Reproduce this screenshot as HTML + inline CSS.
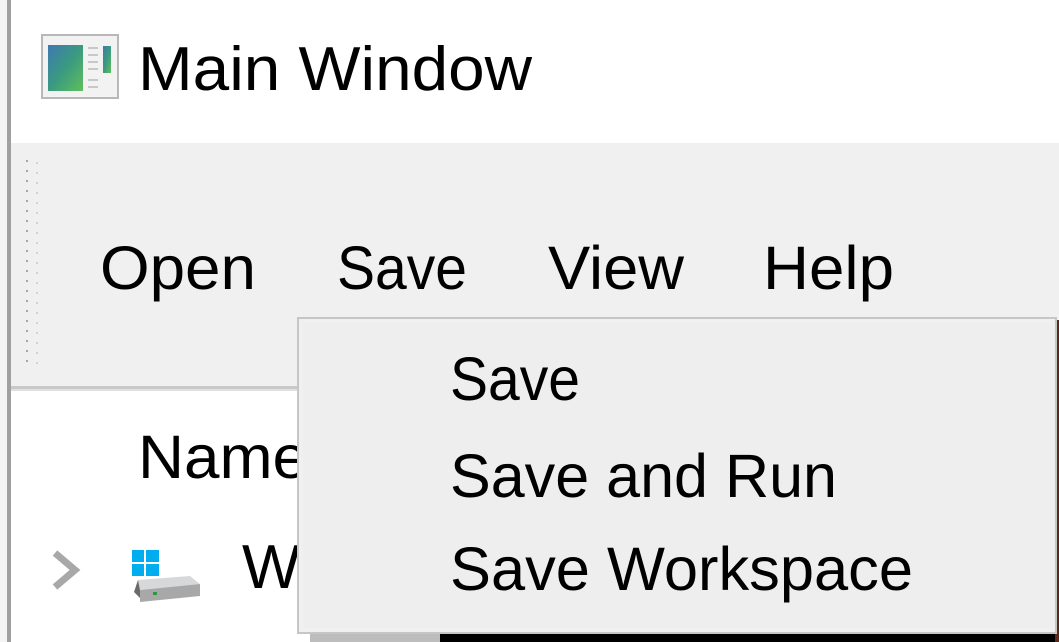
<!DOCTYPE html>
<html><head><meta charset="utf-8"><style>
html,body{margin:0;padding:0;width:1059px;height:642px;overflow:hidden;background:#fff}
svg{display:block}
text{font-family:"Liberation Sans",sans-serif;fill:#000}
</style></head><body>
<svg width="1059" height="642" viewBox="0 0 1059 642" xmlns="http://www.w3.org/2000/svg">
<defs>
<linearGradient id="g1" x1="0" y1="0" x2="1" y2="1"><stop offset="0" stop-color="#3f78b0"/><stop offset="0.5" stop-color="#3a9a80"/><stop offset="1" stop-color="#5fbf5a"/></linearGradient>
</defs>
<rect width="1059" height="642" fill="#fff"/>
<rect x="0" y="0" width="8" height="642" fill="#f4f4f4"/>
<rect x="7" y="0" width="4" height="642" fill="#a0a0a0"/>
<rect x="11" y="143" width="1048" height="245" fill="#f0f0f0"/>
<rect x="11" y="386" width="1048" height="3" fill="#c8c8c8"/>
<rect x="11" y="389" width="1048" height="2" fill="#e0e0e0"/>
<line x1="27" y1="160" x2="27" y2="370" stroke="#a8a8a8" stroke-width="2" stroke-dasharray="2,8"/>
<line x1="37" y1="162" x2="37" y2="370" stroke="#c8c8c8" stroke-width="1.5" stroke-dasharray="2,8"/>
<rect x="42" y="35" width="76" height="63" fill="#f2f2f2" stroke="#b8b8b8" stroke-width="2"/>
<rect x="48" y="45" width="35" height="46" fill="url(#g1)"/>
<g stroke="#c8c8c8" stroke-width="2"><line x1="88" y1="48" x2="98" y2="48"/><line x1="88" y1="55" x2="98" y2="55"/><line x1="88" y1="62" x2="98" y2="62"/><line x1="88" y1="69" x2="98" y2="69"/><line x1="88" y1="80" x2="98" y2="80"/><line x1="88" y1="87" x2="98" y2="87"/></g>
<rect x="103" y="46" width="8" height="27" fill="url(#g1)"/>
<text x="138" y="90" font-size="62" textLength="394" lengthAdjust="spacingAndGlyphs">Main Window</text>
<text x="100" y="289" font-size="61" textLength="156" lengthAdjust="spacingAndGlyphs">Open</text>
<text x="337" y="289" font-size="61" textLength="130" lengthAdjust="spacingAndGlyphs">Save</text>
<text x="548" y="289" font-size="61" textLength="136" lengthAdjust="spacingAndGlyphs">View</text>
<text x="763" y="289" font-size="61" textLength="131" lengthAdjust="spacingAndGlyphs">Help</text>
<text x="138" y="478" font-size="61" textLength="170" lengthAdjust="spacingAndGlyphs">Name</text>
<path d="M55 553 L75 570 L55 587" fill="none" stroke="#a8a8a8" stroke-width="7"/>
<g fill="#00adef"><rect x="132" y="550" width="12" height="12"/><rect x="146" y="550" width="13" height="12"/><rect x="132" y="564" width="12" height="12"/><rect x="146" y="564" width="13" height="12"/></g>
<path d="M138 580 L190 576 L200 584 L140 590 Z" fill="#d6d8da"/>
<path d="M138 580 L140 590 L140 598 L134 592 Z" fill="#6a6a6a"/>
<path d="M140 590 L200 584 L200 596 L140 602 Z" fill="#a8a8a8"/>
<rect x="153" y="592" width="4" height="3" fill="#2a9a3a"/>
<text x="242" y="588" font-size="62">W</text>
<rect x="440" y="632" width="619" height="10" fill="#000"/>
<rect x="310" y="632" width="130" height="10" fill="#bdbdbd"/>
<rect x="1055" y="320" width="4" height="322" fill="#5a2a1a"/>
<rect x="298" y="318" width="758" height="315" fill="#f0f0f0" stroke="#c6c6c6" stroke-width="2"/>
<rect x="303" y="323" width="748" height="305" fill="#eeeeee"/>
<text x="450" y="400" font-size="61" textLength="130" lengthAdjust="spacingAndGlyphs">Save</text>
<text x="450" y="497" font-size="61" textLength="387" lengthAdjust="spacingAndGlyphs">Save and Run</text>
<text x="450" y="590" font-size="61" textLength="463" lengthAdjust="spacingAndGlyphs">Save Workspace</text>
</svg>
</body></html>
